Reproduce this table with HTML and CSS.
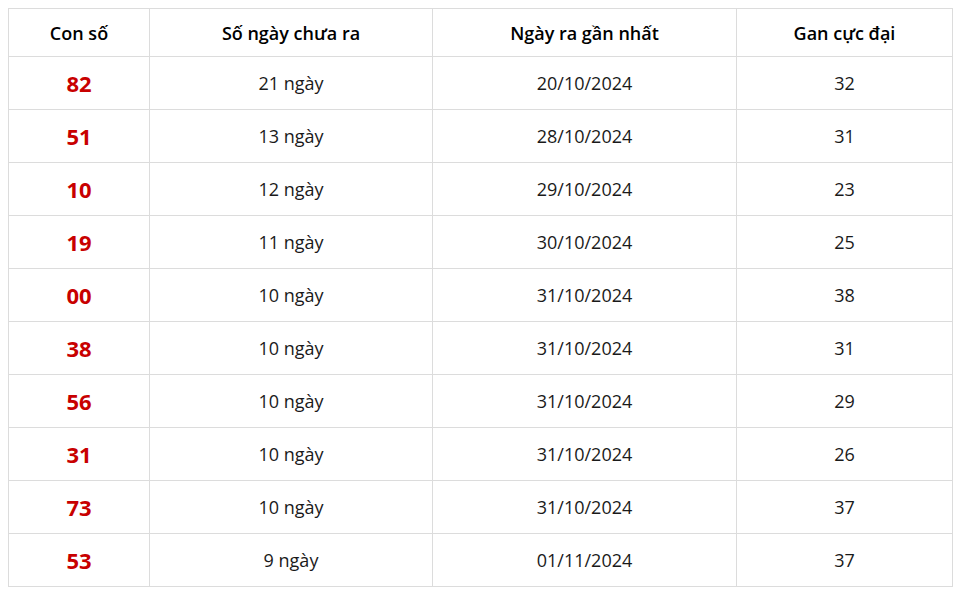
FILE: index.html
```html
<!DOCTYPE html>
<html lang="vi">
<head>
<meta charset="utf-8">
<title>Lô gan</title>
<link rel="stylesheet" href="styles.css">
</head>
<body>
<table class="gan-table">
  <colgroup>
    <col class="c1">
    <col class="c2">
    <col class="c3">
    <col class="c4">
  </colgroup>
  <thead>
    <tr><th>Con số</th><th>Số ngày chưa ra</th><th>Ngày ra gần nhất</th><th>Gan cực đại</th></tr>
  </thead>
  <tbody>
    <tr><td class="num">82</td><td>21 ngày</td><td>20/10/2024</td><td>32</td></tr>
    <tr><td class="num">51</td><td>13 ngày</td><td>28/10/2024</td><td>31</td></tr>
    <tr><td class="num">10</td><td>12 ngày</td><td>29/10/2024</td><td>23</td></tr>
    <tr><td class="num">19</td><td>11 ngày</td><td>30/10/2024</td><td>25</td></tr>
    <tr><td class="num">00</td><td>10 ngày</td><td>31/10/2024</td><td>38</td></tr>
    <tr><td class="num">38</td><td>10 ngày</td><td>31/10/2024</td><td>31</td></tr>
    <tr><td class="num">56</td><td>10 ngày</td><td>31/10/2024</td><td>29</td></tr>
    <tr><td class="num">31</td><td>10 ngày</td><td>31/10/2024</td><td>26</td></tr>
    <tr><td class="num">73</td><td>10 ngày</td><td>31/10/2024</td><td>37</td></tr>
    <tr><td class="num">53</td><td>9 ngày</td><td>01/11/2024</td><td>37</td></tr>
  </tbody>
</table>
</body>
</html>
```
FILE: styles.css
```css
html, body {
  background: #fff;
}
body {
  margin: 8px 0 0 8px;
  font-family: "Open Sans", "Noto Sans", sans-serif;
  color: #1a1a1a;
}
.gan-table {
  border-collapse: collapse;
  width: 944px;
  table-layout: fixed;
}
.c1 { width: 141px; }
.c2 { width: 283px; }
.c3 { width: 304px; }
.c4 { width: 216px; }
.gan-table th,
.gan-table td {
  border: 1px solid #dcdcdc;
  text-align: center;
  padding: 0;
  font-size: 18px;
  line-height: 24px;
}
.gan-table th {
  height: 47px;
  font-weight: 600;
  color: #000;
}
.gan-table td {
  height: 52px;
  color: #1a1a1a;
}
.gan-table td.num {
  font-size: 22px;
  font-weight: 700;
  color: #c80000;
}
```
